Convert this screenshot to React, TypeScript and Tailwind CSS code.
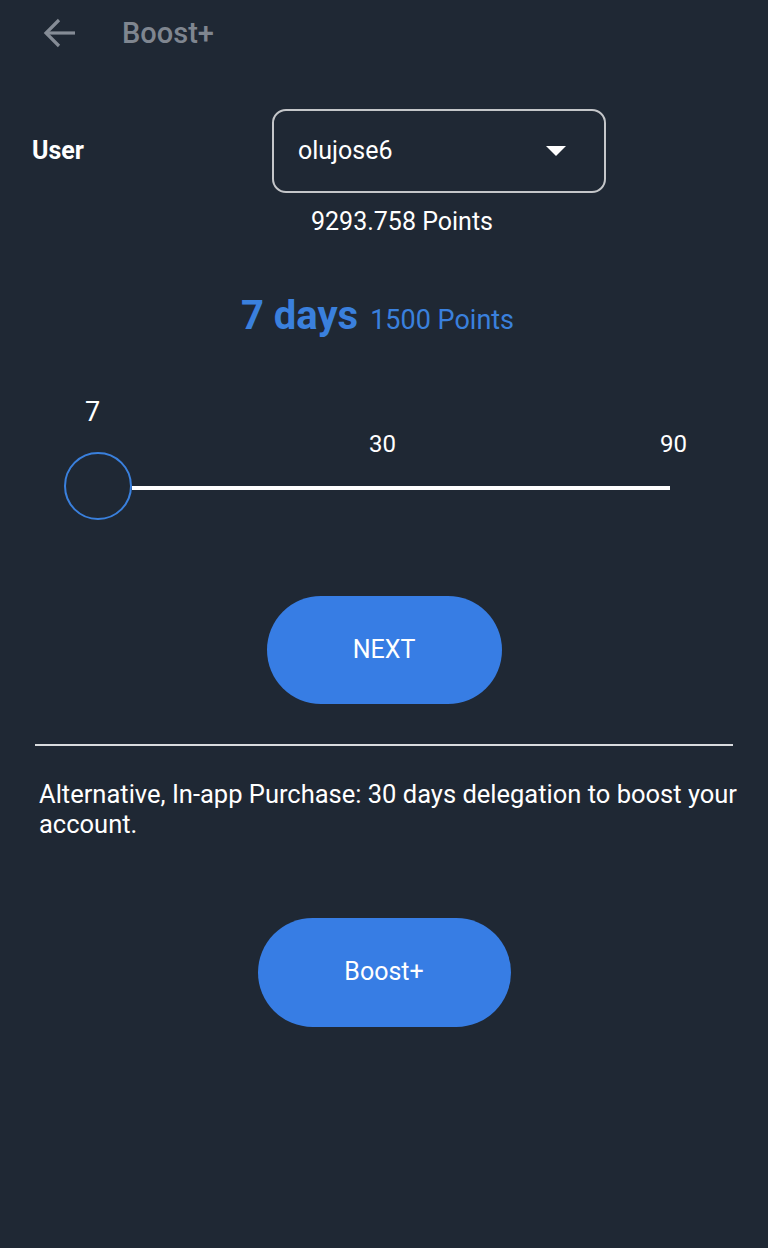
import React from 'react';

const BackArrow: React.FC = () => (
  <svg width="34" height="30" viewBox="0 0 34 30" fill="none" stroke="#858c96" strokeWidth="3.2" strokeLinecap="butt">
    <path d="M32 15H4" />
    <path d="M16 2L3 15l13 13" />
  </svg>
);

const App: React.FC = () => {
  return (
    <div className="min-h-[1248px] w-full bg-[#1f2834] font-['Roboto',sans-serif] text-white">
      {/* Top bar */}
      <div className="flex h-[66px] items-center pl-[43px]">
        <BackArrow />
        <span className="ml-[45px] text-[29px] font-medium leading-[34px] text-[#7f8690]">Boost+</span>
      </div>

      {/* User select */}
      <div className="mt-[43px] flex items-center pl-[32px]">
        <span className="w-[240px] text-[25px] font-bold leading-[30px]">User</span>
        <div className="flex h-[84px] w-[334px] items-center justify-between rounded-[14px] border-2 border-[#c4c6c9] pl-[24px] pr-[38px]">
          <span className="text-[25px] leading-[30px]">olujose6</span>
          <svg width="20" height="10" viewBox="0 0 20 10">
            <path d="M0 0h20L10 10z" fill="#ffffff" />
          </svg>
        </div>
      </div>
      <p className="mt-[14px] pl-[36px] text-center text-[25px] leading-[30px]">9293.758 Points</p>

      {/* Duration */}
      <div className="mt-[56px] flex items-baseline justify-center pr-[13px] text-[#3a80dd]">
        <span className="text-[40px] font-bold leading-[46px]">7 days</span>
        <span className="ml-[12px] text-[27px]">1500 Points</span>
      </div>

      {/* Slider */}
      <div className="mt-[55px]">
        <div className="pl-[85px] text-[27px] leading-[32px]">7</div>
        <div className="flex pl-[369px] text-[24px] leading-[32px]">
          <span>30</span>
          <span className="ml-[264px]">90</span>
        </div>
        <div className="mt-[-8px] flex items-center">
          <div className="ml-[64px] h-[68px] w-[68px] rounded-full border-2 border-[#3a80dd]" />
          <div className="mt-[4px] h-[4px] w-[538px] bg-white" />
        </div>
      </div>

      <button className="mx-auto mt-[76px] flex h-[108px] w-[235px] items-center justify-center rounded-full bg-[#377de4] text-[25px] leading-[30px] text-white">
        NEXT
      </button>

      <div className="ml-[35px] mt-[40px] h-[2px] w-[698px] bg-[#d9dbde]" />

      <p className="mt-[33px] pl-[39px] pr-[12px] text-[25.5px] leading-[30px]">
        Alternative, In-app Purchase: 30 days delegation to boost your account.
      </p>

      <button className="mx-auto mt-[79px] flex h-[109px] w-[253px] items-center justify-center rounded-full bg-[#377de4] text-[25px] leading-[30px] text-white">
        Boost+
      </button>
    </div>
  );
};

export default App;
